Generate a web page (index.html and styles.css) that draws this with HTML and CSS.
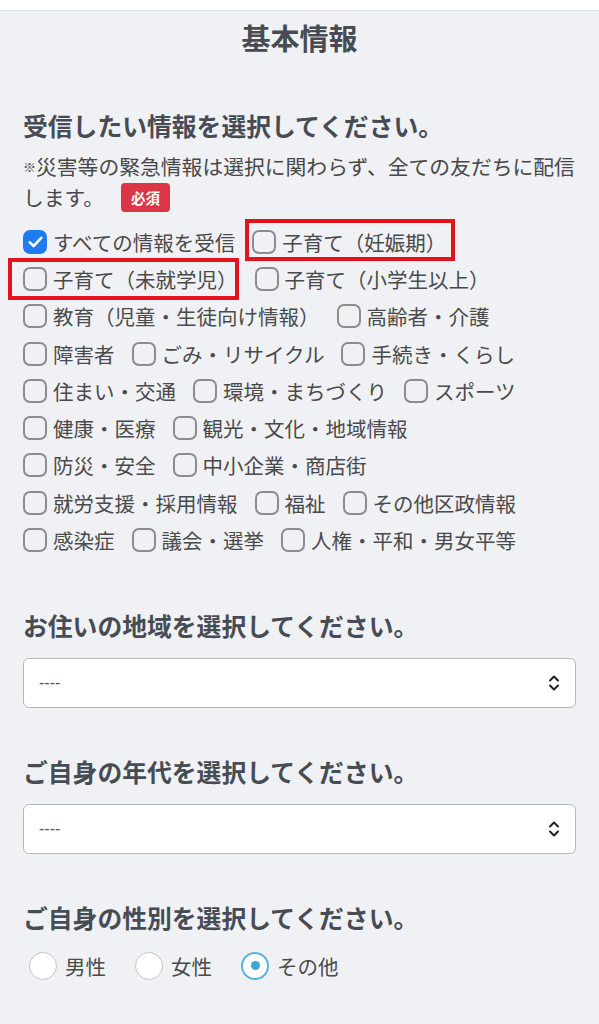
FILE: index.html
```html
<!DOCTYPE html>
<html lang="ja">
<head>
  <meta charset="UTF-8">
  <meta name="viewport" content="width=device-width, initial-scale=1.0">
  <title>基本情報</title>
  <link rel="stylesheet" href="styles.css">
</head>
<body>
  <div class="topbar"></div>
  <main class="form">
    <h1 class="form__title">基本情報</h1>

    <!-- 受信したい情報 -->
    <h2 class="field-label field-label--first">受信したい情報を選択してください。</h2>
    <p class="note"><span class="note__mark">※</span>災害等の緊急情報は選択に関わらず、全ての友だちに配信</p>
    <p class="note note--last">します。<span class="badge">必須</span></p>

    <div class="checks">
      <div class="checks__row">
        <label class="check">
          <span class="check__box check__box--on">
            <svg width="15" height="12" viewBox="0 0 15 12"><path d="M1.8 6.4 5.6 10 13.2 1.8" fill="none" stroke="#fff" stroke-width="2.6" stroke-linecap="round" stroke-linejoin="round"/></svg>
          </span>
          <span class="check__text">すべての情報を受信</span>
        </label>
        <label class="check check--mark-a"><span class="check__box"></span><span class="check__text">子育て（妊娠期）</span></label>
      </div>
      <div class="checks__row">
        <label class="check check--mark-b"><span class="check__box"></span><span class="check__text">子育て（未就学児）</span></label>
        <label class="check"><span class="check__box"></span><span class="check__text">子育て（小学生以上）</span></label>
      </div>
      <div class="checks__row">
        <label class="check"><span class="check__box"></span><span class="check__text">教育（児童・生徒向け情報）</span></label>
        <label class="check"><span class="check__box"></span><span class="check__text">高齢者・介護</span></label>
      </div>
      <div class="checks__row">
        <label class="check"><span class="check__box"></span><span class="check__text">障害者</span></label>
        <label class="check"><span class="check__box"></span><span class="check__text">ごみ・リサイクル</span></label>
        <label class="check"><span class="check__box"></span><span class="check__text">手続き・くらし</span></label>
      </div>
      <div class="checks__row">
        <label class="check"><span class="check__box"></span><span class="check__text">住まい・交通</span></label>
        <label class="check"><span class="check__box"></span><span class="check__text">環境・まちづくり</span></label>
        <label class="check"><span class="check__box"></span><span class="check__text">スポーツ</span></label>
      </div>
      <div class="checks__row">
        <label class="check"><span class="check__box"></span><span class="check__text">健康・医療</span></label>
        <label class="check"><span class="check__box"></span><span class="check__text">観光・文化・地域情報</span></label>
      </div>
      <div class="checks__row">
        <label class="check"><span class="check__box"></span><span class="check__text">防災・安全</span></label>
        <label class="check"><span class="check__box"></span><span class="check__text">中小企業・商店街</span></label>
      </div>
      <div class="checks__row">
        <label class="check"><span class="check__box"></span><span class="check__text">就労支援・採用情報</span></label>
        <label class="check"><span class="check__box"></span><span class="check__text">福祉</span></label>
        <label class="check"><span class="check__box"></span><span class="check__text">その他区政情報</span></label>
      </div>
      <div class="checks__row">
        <label class="check"><span class="check__box"></span><span class="check__text">感染症</span></label>
        <label class="check"><span class="check__box"></span><span class="check__text">議会・選挙</span></label>
        <label class="check"><span class="check__box"></span><span class="check__text">人権・平和・男女平等</span></label>
      </div>
    </div>

    <!-- お住いの地域 -->
    <h2 class="field-label">お住いの地域を選択してください。</h2>
    <div class="select">
      <span class="select__value">----</span>
      <svg class="select__arrow" width="12" height="18" viewBox="0 0 12 18"><path d="M2 6.5 6 2.5 10 6.5M2 11.5 6 15.5 10 11.5" fill="none" stroke="#222" stroke-width="2" stroke-linecap="round" stroke-linejoin="round"/></svg>
    </div>

    <!-- ご自身の年代 -->
    <h2 class="field-label">ご自身の年代を選択してください。</h2>
    <div class="select">
      <span class="select__value">----</span>
      <svg class="select__arrow" width="12" height="18" viewBox="0 0 12 18"><path d="M2 6.5 6 2.5 10 6.5M2 11.5 6 15.5 10 11.5" fill="none" stroke="#222" stroke-width="2" stroke-linecap="round" stroke-linejoin="round"/></svg>
    </div>

    <!-- ご自身の性別 -->
    <h2 class="field-label">ご自身の性別を選択してください。</h2>
    <div class="radios">
      <label class="radio"><span class="radio__dot"></span><span class="radio__text">男性</span></label>
      <label class="radio"><span class="radio__dot"></span><span class="radio__text">女性</span></label>
      <label class="radio"><span class="radio__dot radio__dot--on"></span><span class="radio__text">その他</span></label>
    </div>
  </main>
</body>
</html>
```

FILE: styles.css
```css
body {
  margin: 0;
  background-color: #F0F1F5;
  font-family: "Noto Sans CJK JP", "Noto Sans", sans-serif;
  color: #4A4A4A;
}

.topbar {
  height: 10px;
  background-color: #FFFFFF;
  border-bottom: 1px solid #E3E3E9;
}

.form {
  padding: 0 23px 40px;
}

.form__title {
  margin: 6px 0 0;
  font-size: 29px;
  line-height: 40px;
  font-weight: bold;
  text-align: center;
  color: #474C54;
}

.field-label {
  margin: 46px 0 0;
  font-size: 24.8px;
  line-height: 34px;
  font-weight: bold;
  color: #474C54;
}

.field-label--first {
  margin-top: 51px;
}

.checks + .field-label {
  margin-top: 49px;
}

.note {
  display: flex;
  align-items: center;
  height: 31px;
  margin: 9px 0 0;
  font-size: 20.8px;
  line-height: 31px;
  white-space: nowrap;
  color: #474747;
}

.note--last {
  margin-top: 0;
}

.note__mark {
  font-size: 13px;
}

.badge {
  display: block;
  margin-left: 17px;
  padding: 0 10px;
  height: 29px;
  line-height: 29px;
  border-radius: 4px;
  background-color: #DC3545;
  color: #FFFFFF;
  font-size: 14.5px;
  font-weight: bold;
}

.checks {
  margin-top: 10px;
}

.checks__row {
  display: flex;
  align-items: center;
  column-gap: 17px;
  height: 37.3px;
}

.check {
  position: relative;
  display: flex;
  align-items: center;
  gap: 6px;
  font-size: 20.5px;
  line-height: 24px;
  white-space: nowrap;
}

.check__box {
  display: flex;
  align-items: center;
  justify-content: center;
  box-sizing: border-box;
  width: 24px;
  height: 24px;
  border: 2px solid #8C8C8C;
  border-radius: 7px;
}

.check__box--on {
  border: none;
  background-color: #1E7CF2;
}

/* red marker frames drawn over two of the options */
.check--mark-a::after,
.check--mark-b::after {
  content: "";
  position: absolute;
  border: 4px solid #E3131E;
}

.check--mark-a::after {
  left: -7px;
  right: -9px;
  top: -11px;
  bottom: -7px;
}

.check--mark-b::after {
  left: -15px;
  right: -1px;
  top: -9px;
  bottom: -9px;
}

.field-label + .select {
  margin-top: 16px;
}

.select {
  display: flex;
  align-items: center;
  justify-content: space-between;
  box-sizing: border-box;
  height: 50px;
  padding: 0 15px 0 15px;
  border: 1px solid #B8B8BC;
  border-radius: 6px;
  background-color: #FFFFFF;
}

.select__value {
  font-family: "Liberation Sans", sans-serif;
  font-size: 16px;
  color: #555555;
}

.radios {
  display: flex;
  align-items: center;
  height: 36px;
  margin-top: 14px;
  padding-left: 6px;
  gap: 29px;
}

.radio {
  display: flex;
  align-items: center;
  gap: 8px;
  font-size: 20.5px;
  line-height: 28px;
}

.radio__dot {
  display: flex;
  align-items: center;
  justify-content: center;
  box-sizing: border-box;
  width: 28px;
  height: 28px;
  border: 1.5px solid #C6C6CC;
  border-radius: 50%;
  background-color: #FFFFFF;
}

.radio__dot--on {
  border: 2px solid #5AB3DD;
}

.radio__dot--on::before {
  content: "";
  width: 9px;
  height: 9px;
  border-radius: 50%;
  background-color: #3FA7D8;
}
```
